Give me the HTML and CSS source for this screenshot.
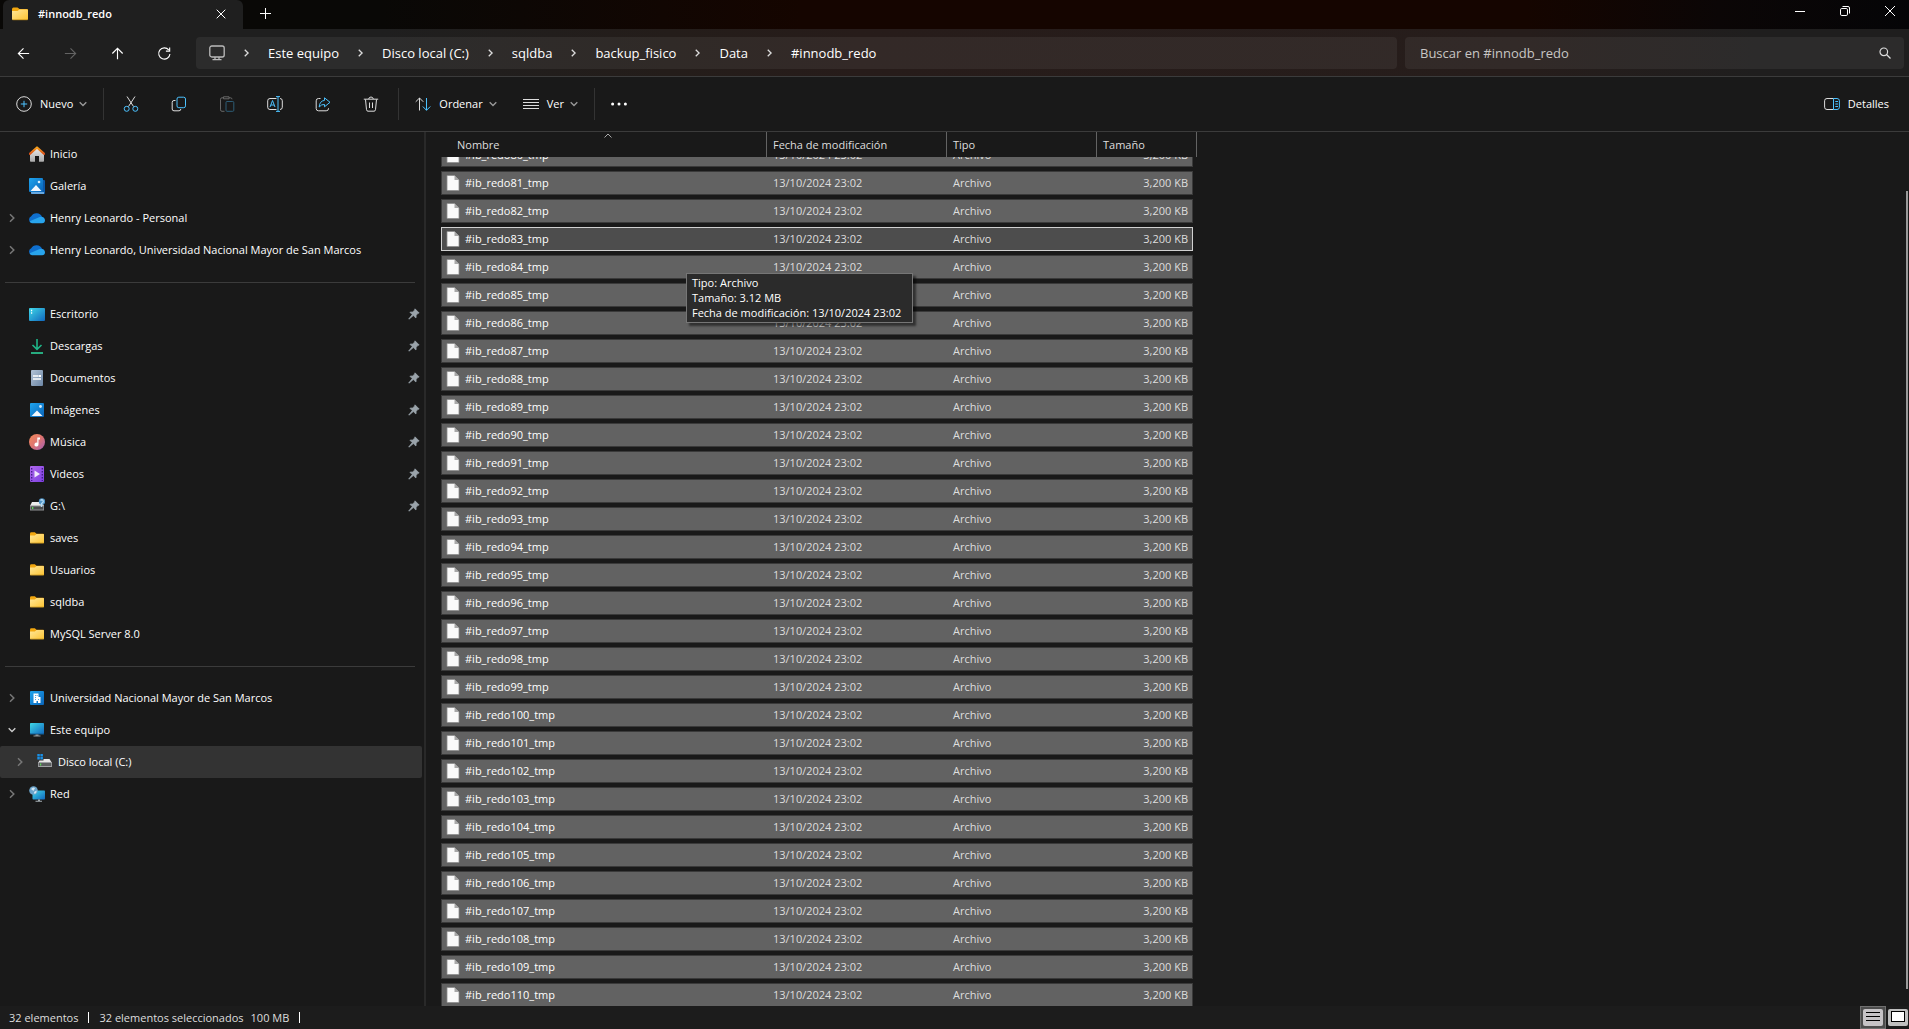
FILE: index.html
```html
<!DOCTYPE html>
<html lang="es">
<head>
<meta charset="utf-8">
<meta name="viewport" content="width=device-width, initial-scale=1">
<title>#innodb_redo</title>
<link rel="stylesheet" href="styles.css">
</head>
<body>
<svg class="defs" width="0" height="0" aria-hidden="true">
  <defs>
    <linearGradient id="gFolder" x1="0" y1="0" x2="1" y2="1"><stop offset="0" stop-color="#ffe79a"/><stop offset="1" stop-color="#fdc432"/></linearGradient>
    <linearGradient id="gRoof" x1="0" y1="0" x2="0" y2="1"><stop offset="0" stop-color="#f7a11b"/><stop offset="1" stop-color="#d9511a"/></linearGradient>
    <linearGradient id="gWall" x1="0" y1="0" x2="0" y2="1"><stop offset="0" stop-color="#f0f0f0"/><stop offset="1" stop-color="#a9a9a9"/></linearGradient>
    <linearGradient id="gBlue" x1="0" y1="0" x2="1" y2="1"><stop offset="0" stop-color="#1ea4ee"/><stop offset="1" stop-color="#0a63b8"/></linearGradient>
    <linearGradient id="gDesk" x1="0" y1="0" x2="1" y2="1"><stop offset="0" stop-color="#3fd8e8"/><stop offset="1" stop-color="#1167bd"/></linearGradient>
    <linearGradient id="gDoc" x1="0" y1="0" x2="1" y2="1"><stop offset="0" stop-color="#b3c3d6"/><stop offset="1" stop-color="#6c86a5"/></linearGradient>
    <linearGradient id="gMusic" x1="0" y1="0" x2="1" y2="1"><stop offset="0" stop-color="#f48a58"/><stop offset=".5" stop-color="#dd7472"/><stop offset="1" stop-color="#a45fb5"/></linearGradient>
    <linearGradient id="gVideo" x1="0" y1="0" x2="1" y2="1"><stop offset="0" stop-color="#b068ee"/><stop offset="1" stop-color="#7c3fe0"/></linearGradient>
  </defs>
  <symbol id="i-folder" viewBox="0 0 16 16"><path d="M0 3.2Q0 1.500 1.500 1.500h4L7.500 3H15q1 0 1 1v4H0z" fill="#f2a70f"/><path d="M0 5h5.500L7.500 3.500H15q1 0 1 1V13q0 1-1 1H1q-1 0-1-1z" fill="url(#gFolder)"/><path d="M.5 13.800h15" stroke="#b98411" stroke-width=".7"/></symbol>
  <symbol id="i-home" viewBox="0 0 16 16"><path d="M1 7l7-6 7 6v8q0 .8-.8.8H10V10H6v5.800H1.800Q1 15.800 1 15z" fill="url(#gWall)"/><path d="M.8 7.800L8 1.500l7.200 6.300" fill="none" stroke="url(#gRoof)" stroke-width="2.200" stroke-linecap="round" stroke-linejoin="round"/></symbol>
  <symbol id="i-gallery" viewBox="0 0 16 16"><rect x="2" y="2" width="14" height="14" rx="1" fill="#0a58a8"/><path d="M2 14h13v2H3q-1 0-1-1z" fill="#67a8e0"/><rect width="14" height="14" rx="1" fill="url(#gBlue)"/><path d="M1.500 13L7 7l5.500 6z" fill="#f1f7fd"/><circle cx="10" cy="4" r="1.300" fill="#d7edfc"/></symbol>
  <symbol id="i-cloud" viewBox="0 0 16 16"><path d="M3.500 13A3.500 3.500 0 0 1 2.200 6.300 6 6 0 0 1 13 6.800 3.200 3.200 0 0 1 13 13z" fill="#0f6fce"/><path d="M3 13.200Q1 13 .7 11.300L9.500 7.500Q12 6.300 14 7.300q2 1 2 3 0 2.900-3 2.900z" fill="#28a4ec"/></symbol>
  <symbol id="i-desktop" viewBox="0 0 16 16"><rect y="2" width="16" height="13" rx="1" fill="url(#gDesk)"/><path d="M2 4.500h1.200M2 7h1.200" stroke="#fff" stroke-width="1.300"/></symbol>
  <symbol id="i-download" viewBox="0 0 16 16"><path d="M8 1v10M3.500 7L8 11.300 12.500 7" fill="none" stroke="#1fb487" stroke-width="1.600"/><path d="M2 15h12" stroke="#2bc793" stroke-width="1.700"/></symbol>
  <symbol id="i-doc" viewBox="0 0 16 16"><rect x="2" width="12" height="16" rx="1" fill="url(#gDoc)"/><path d="M4 6h5M4 9h8" stroke="#fff" stroke-width="1.500"/><rect x="9.500" y="5" width="2.500" height="2" fill="#fff"/></symbol>
  <symbol id="i-images" viewBox="0 0 16 16"><rect x="1" y="1" width="14" height="14" rx="1" fill="url(#gBlue)"/><path d="M2.500 14L8 8.500l5.500 5.500z" fill="#f1f7fd"/><circle cx="11.500" cy="4.500" r="1.400" fill="#d7edfc"/></symbol>
  <symbol id="i-music" viewBox="0 0 16 16"><circle cx="8" cy="8" r="8" fill="url(#gMusic)"/><path d="M8.300 3.500h2.700v2H9.500v5a2 2 0 1 1-1.200-1.800z" fill="#fff"/></symbol>
  <symbol id="i-video" viewBox="0 0 16 16"><rect x="1" width="14" height="16" rx="1" fill="url(#gVideo)"/><path d="M2.700 2v13M13.300 2v13" stroke="#3f1a86" stroke-width="1.300" stroke-dasharray="1.500 1.500"/><path d="M5.500 4.500L11 8l-5.500 3.500z" fill="#f1e8fc"/></symbol>
  <symbol id="i-netdrive" viewBox="0 0 16 16"><path d="M3 4h10l2 4H1z" fill="#ededed"/><rect x="1" y="7.500" width="14" height="5" fill="#8f9193"/><rect x="1.800" y="8.500" width="12.400" height="3" fill="#4a4c4d"/><rect x="3" y="9" width="1.300" height="2" fill="#5fd85a"/><circle cx="13" cy="3.500" r="3.200" fill="#4e93c6"/><path d="M11.500 2.500q1.500-1.500 2.500 0t-1.500 3V9" fill="none" stroke="#b8dcf3" stroke-width="1.300"/></symbol>
  <symbol id="i-drive" viewBox="0 0 16 16"><path d="M6.500 5h6l2.500 4H1l1.500-2.500h4z" fill="#e8e8e8"/><rect x="1" y="8" width="14" height="5" rx=".5" fill="#9fa1a3"/><rect x="1.800" y="9" width="12.400" height="3" fill="#5c5e5f"/><rect x="3" y="9.500" width="1.200" height="2" fill="#5fd85a"/><path d="M.3 0h2.500v2.400H.3zM3.400 0h2.500v2.400H3.400zM.3 3h2.500v2.400H.3zM3.400 3h2.500v2.400H3.400z" fill="#1990e6"/></symbol>
  <symbol id="i-org" viewBox="0 0 16 16"><rect x="1" y="1" width="14" height="14" rx="1" fill="url(#gBlue)"/><path d="M4.500 3.500h5V7H11.500v6H9v-2H7.500v2h-3z" fill="#fff"/><path d="M6 5.500h.8M7.700 5.500h.8M6 7.500h.8M6 9.500h.8M9 9.500h.8" stroke="#2b8bd8"/></symbol>
  <symbol id="i-pc" viewBox="0 0 16 16"><rect x="1" y="1" width="14" height="11" rx=".8" fill="url(#gDesk)"/><path d="M1 12h14" stroke="#0f5c96"/><path d="M6.500 12.500h3v1h2v1h-7v-1h2z" fill="#8f979c"/></symbol>
  <symbol id="i-network" viewBox="0 0 16 16"><rect x="3.500" y="4.500" width="12.500" height="9" rx=".8" fill="url(#gDesk)"/><path d="M9 13.500h2v1.300h2v1H6.500v-1H9z" fill="#a4adb2"/><circle cx="4.500" cy="4.500" r="4.300" fill="#6ba4cb"/><path d="M2 3q2-2.500 4-1L4.500 5zM5 6l2.500-1.500Q8 7 5.500 8z" fill="#d5e8f4"/></symbol>
  <symbol id="i-pin" viewBox="0 0 12 12"><path d="M7 .8L11.200 5l-1.200.3-1.800 2L8 10 5.300 7.600 1 11.200l-.3-.2L4.200 6.600 1.900 4.200l2.800-.3L6.700 2z" fill="#9aa3aa" stroke="#9aa3aa" stroke-width=".7" stroke-linejoin="round"/></symbol>
  <symbol id="i-right" viewBox="0 0 8 8"><path d="M2 .3L5.800 4 2 7.700" fill="none" stroke="currentColor" stroke-width="1.500"/></symbol>
  <symbol id="i-down" viewBox="0 0 8 8"><path d="M.7 2.300L4 5.500l3.300-3.200" fill="none" stroke="currentColor" stroke-width="1.400"/></symbol>
  <symbol id="i-file" viewBox="0 0 14 16"><path d="M1 .5h7.500L13 5v10.500H1z" fill="#fafafa" stroke="#8e8e8e" stroke-width=".8"/><path d="M8.500.5V5H13z" fill="#a8a8a8"/></symbol>
</svg>

<div class="window">
  <header class="titlebar">
    <div class="tab">
      <svg class="icon"><use href="#i-folder"/></svg>
      <span class="tab-title">#innodb_redo</span>
      <button class="tab-close" aria-label="Cerrar pestaña"><svg viewBox="0 0 10 10"><path d="M.7.700l8.600 8.600M9.300.700L.7 9.300"/></svg></button>
    </div>
    <button class="tab-new" aria-label="Nueva pestaña"><svg viewBox="0 0 11 11"><path d="M5.500 0v11M0 5.500h11"/></svg></button>
    <div class="window-controls">
      <button aria-label="Minimizar"><svg viewBox="0 0 10 10"><path d="M0 5.500h10"/></svg></button>
      <button aria-label="Restaurar"><svg viewBox="0 0 10 10"><rect x=".5" y="2.500" width="7" height="7" rx="1.300"/><path d="M2.500.5H8q1.500 0 1.500 1.500v5.500"/></svg></button>
      <button aria-label="Cerrar"><svg viewBox="0 0 10 10"><path d="M0 0l10 10M10 0L0 10"/></svg></button>
    </div>
  </header>

  <div class="navbar">
    <div class="nav-buttons">
      <button aria-label="Atrás"><svg viewBox="0 0 16 16"><path d="M14 8H2.500M8 2.500L2.500 8 8 13.500"/></svg></button>
      <button aria-label="Adelante" disabled><svg viewBox="0 0 16 16"><path d="M2 8h11.500M8 2.500L13.500 8 8 13.500"/></svg></button>
      <button aria-label="Arriba"><svg viewBox="0 0 16 16"><path d="M8 14V2.500M2.500 8L8 2.500 13.500 8"/></svg></button>
      <button aria-label="Actualizar"><svg viewBox="0 0 16 16"><path d="M13.800 8.500A6 6 0 1 1 12.500 4.200M13.500 1.500v4h-4"/></svg></button>
    </div>
    <nav class="breadcrumb" aria-label="Ruta">
      <svg class="monitor" viewBox="0 0 16 16"><rect x=".8" y="1" width="14.400" height="11" rx="2"/><path d="M6 12v2.500M10 12v2.500M3.500 14.700h9"/></svg>
      <svg class="sep"><use href="#i-right"/></svg><a href="#">Este equipo</a>
      <svg class="sep"><use href="#i-right"/></svg><a href="#">Disco local (C:)</a>
      <svg class="sep"><use href="#i-right"/></svg><a href="#">sqldba</a>
      <svg class="sep"><use href="#i-right"/></svg><a href="#">backup_fisico</a>
      <svg class="sep"><use href="#i-right"/></svg><a href="#">Data</a>
      <svg class="sep"><use href="#i-right"/></svg><a href="#">#innodb_redo</a>
    </nav>
    <label class="search">
      <input type="search" placeholder="Buscar en #innodb_redo" aria-label="Buscar en #innodb_redo">
      <svg viewBox="0 0 12 12"><circle cx="4.800" cy="4.800" r="3.800"/><path d="M7.500 7.500l4 4"/></svg>
    </label>
  </div>

  <div class="toolbar">
    <button class="text-button"><svg class="icon line" viewBox="0 0 16 16"><circle cx="8" cy="8" r="7.300"/><path class="accent" d="M8 4.800v6.400M4.800 8h6.400"/></svg>Nuevo<svg class="caret"><use href="#i-down"/></svg></button>
    <span class="divider"></span>
    <div class="icon-group">
      <button aria-label="Cortar"><svg class="icon line" viewBox="0 0 16 16"><path d="M4 .5l6.500 10M12 .5l-6.500 10"/><circle class="accent" cx="3.700" cy="12.800" r="2.500"/><circle class="accent" cx="12.300" cy="12.800" r="2.500"/></svg></button>
      <button aria-label="Copiar"><svg class="icon line" viewBox="0 0 16 16"><path d="M4.500 4.500H3Q1.200 4.500 1.200 6.300V13q0 1.800 1.800 1.800h5q1.800 0 1.800-1.800"/><rect class="accent" x="6" y="1.200" width="8.500" height="10.500" rx="1.800"/></svg></button>
      <button aria-label="Pegar" disabled><svg class="icon line" viewBox="0 0 16 16"><path d="M5.500 15.300H3q-1.500 0-1.500-1.500V3.300q0-1.500 1.500-1.500h1.500M10 1.800h1.500q1.500 0 1.500 1.500M4.500.8H10v2H4.500z"/><rect class="accent" x="7" y="5.500" width="7.800" height="9.800" rx="1"/></svg></button>
      <button aria-label="Cambiar nombre"><svg class="icon line" viewBox="0 0 16 16"><path d="M9.500 2.500H3Q.7 2.500.7 4.800v6.400q0 2.300 2.300 2.300h6.500M13 2.500q2.300 0 2.300 2.300v6.400q0 2.300-2.300 2.300"/><path class="accent" d="M11 .6v14.800M9 .6h4M9 15.400h4M3 11l2.500-6.500L8 11M4 9h3"/></svg></button>
      <button aria-label="Compartir"><svg class="icon line" viewBox="0 0 16 16"><path d="M5.500 2.500H3.500Q1.200 2.500 1.200 4.800v7.700q0 2.300 2.300 2.300h7.700q2.300 0 2.300-2.300V12"/><path class="accent" d="M9.500 1.800L15 6.300l-5.500 4.500V8.500Q6.500 8 4.200 11 4.500 5 9.500 4.400z"/></svg></button>
      <button aria-label="Eliminar"><svg class="icon line" viewBox="0 0 16 16"><path d="M.8 3.200h14.400M5.700 3Q6 1 8 1t2.300 2M2.500 3.500l1 10.200q.2 1.500 1.500 1.500h6q1.300 0 1.500-1.500l1-10.200M6.500 6.500v5.500M9.500 6.500v5.500"/></svg></button>
    </div>
    <span class="divider"></span>
    <button class="text-button sort-button"><svg class="icon line" viewBox="0 0 16 16"><path d="M4.500 14.500V2M.7 5.800L4.500 2l3.800 3.800"/><path class="accent" d="M11.500 2v12.300M7.800 10.500l3.700 3.800 3.800-3.800"/></svg>Ordenar<svg class="caret"><use href="#i-down"/></svg></button>
    <button class="text-button"><svg class="icon line" viewBox="0 0 16 16"><path d="M0 3.500h16M0 6.500h16M0 9.500h16M0 12.500h16"/></svg>Ver<svg class="caret"><use href="#i-down"/></svg></button>
    <span class="divider"></span>
    <button class="text-button" aria-label="Más opciones"><svg class="icon dots" viewBox="0 0 16 16"><circle cx="1.600" cy="8" r="1.500"/><circle cx="8" cy="8" r="1.500"/><circle cx="14.400" cy="8" r="1.500"/></svg></button>
    <button class="text-button details"><svg class="icon line" viewBox="0 0 16 16"><path d="M9.500 2.500H3Q.6 2.500.6 4.800v6.400q0 2.300 2.400 2.300h6.500"/><path class="accent" d="M9.500 2.500H13q2.400 0 2.400 2.300v6.400q0 2.300-2.400 2.300H9.500zM11.300 5.500H14M11.300 8H14M11.300 10.500H14"/></svg>Detalles</button>
  </div>

  <div class="body">
    <nav class="sidebar" aria-label="Panel de navegación">
      <ul>
        <li><a href="#"><svg class="icon"><use href="#i-home"/></svg>Inicio</a></li>
        <li><a href="#"><svg class="icon"><use href="#i-gallery"/></svg>Galería</a></li>
        <li><a href="#"><svg class="expand"><use href="#i-right"/></svg><svg class="icon"><use href="#i-cloud"/></svg>Henry Leonardo - Personal</a></li>
        <li><a href="#"><svg class="expand"><use href="#i-right"/></svg><svg class="icon"><use href="#i-cloud"/></svg>Henry Leonardo, Universidad Nacional Mayor de San Marcos</a></li>
      </ul>
      <hr>
      <ul>
        <li><a href="#"><svg class="icon"><use href="#i-desktop"/></svg>Escritorio<svg class="pin"><use href="#i-pin"/></svg></a></li>
        <li><a href="#"><svg class="icon"><use href="#i-download"/></svg>Descargas<svg class="pin"><use href="#i-pin"/></svg></a></li>
        <li><a href="#"><svg class="icon"><use href="#i-doc"/></svg>Documentos<svg class="pin"><use href="#i-pin"/></svg></a></li>
        <li><a href="#"><svg class="icon"><use href="#i-images"/></svg>Imágenes<svg class="pin"><use href="#i-pin"/></svg></a></li>
        <li><a href="#"><svg class="icon"><use href="#i-music"/></svg>Música<svg class="pin"><use href="#i-pin"/></svg></a></li>
        <li><a href="#"><svg class="icon"><use href="#i-video"/></svg>Videos<svg class="pin"><use href="#i-pin"/></svg></a></li>
        <li><a href="#"><svg class="icon"><use href="#i-netdrive"/></svg>G:\<svg class="pin"><use href="#i-pin"/></svg></a></li>
        <li><a href="#"><svg class="icon small"><use href="#i-folder"/></svg>saves</a></li>
        <li><a href="#"><svg class="icon small"><use href="#i-folder"/></svg>Usuarios</a></li>
        <li><a href="#"><svg class="icon small"><use href="#i-folder"/></svg>sqldba</a></li>
        <li><a href="#"><svg class="icon small"><use href="#i-folder"/></svg>MySQL Server 8.0</a></li>
      </ul>
      <hr>
      <ul>
        <li><a href="#"><svg class="expand"><use href="#i-right"/></svg><svg class="icon"><use href="#i-org"/></svg>Universidad Nacional Mayor de San Marcos</a></li>
        <li><a href="#"><svg class="expand open"><use href="#i-down"/></svg><svg class="icon"><use href="#i-pc"/></svg>Este equipo</a></li>
        <li class="child selected"><a href="#"><svg class="expand"><use href="#i-right"/></svg><svg class="icon"><use href="#i-drive"/></svg>Disco local (C:)</a></li>
        <li><a href="#"><svg class="expand"><use href="#i-right"/></svg><svg class="icon"><use href="#i-network"/></svg>Red</a></li>
      </ul>
    </nav>

    <main class="content">
      <table class="files">
        <thead>
          <tr><th scope="col">Nombre<svg class="sort" viewBox="0 0 8 5"><path d="M.5 4.500L4 1l3.500 3.500"/></svg></th><th scope="col">Fecha de modificación</th><th scope="col">Tipo</th><th scope="col">Tamaño</th></tr>
        </thead>
        <tbody id="rows"></tbody>
      </table>
      <div class="tooltip" role="tooltip">Tipo: Archivo<br>Tamaño: 3.12 MB<br>Fecha de modificación: 13/10/2024 23:02</div>
      <div class="scrollbar"></div>
    </main>
  </div>

  <footer class="statusbar">
    <span class="cell">32 elementos</span>
    <span class="cell"><span>32 elementos seleccionados</span><span>100 MB</span></span>
    <div class="views">
      <button class="active" aria-label="Detalles"><svg viewBox="0 0 20 17"><rect width="20" height="17" rx="2" fill="#c6c3c6"/><path d="M3 3.500h14M3 7.500h14M3 11.500h14" stroke="#000"/></svg></button>
      <button aria-label="Iconos grandes"><svg viewBox="0 0 20 17"><rect width="20" height="17" rx="2" fill="#bfbfbf"/><rect x="3.500" y="2.500" width="13" height="10" fill="#fff" stroke="#000"/></svg></button>
    </div>
  </footer>
</div>
<script src="app.js"></script>
</body>
</html>
```

FILE: styles.css
```css
* { box-sizing: border-box; }

body {
  margin: 0;
  background: #191919;
  color: #fff;
  font: 11px/16px "Open Sans", "Noto Sans", sans-serif;
}

button, input { font: inherit; color: inherit; }

button {
  padding: 0;
  border: 0;
  background: none;
  display: flex;
  align-items: center;
  justify-content: center;
}

a { color: inherit; text-decoration: none; }
svg { flex: none; }
ul { list-style: none; margin: 0; padding: 0; }
.defs { position: absolute; }

.icon { width: 16px; height: 16px; }

.window {
  display: flex;
  flex-direction: column;
  height: 100vh;
}

/* Title bar */
.titlebar {
  display: flex;
  height: 29px;
  flex: none;
  background: linear-gradient(90deg, #090806 20%, #150500 42%, #150500 80%, #0b0606 90%, #050507);
}

.tab {
  display: flex;
  align-items: center;
  gap: 10px;
  width: 240px;
  margin-left: 3px;
  padding: 0 12px 2px 9px;
  background: #1f1f1f;
  border-radius: 6px 6px 0 0;
}

.tab-title { flex: 1; font-weight: 600; }
.titlebar svg { fill: none; stroke: #fff; }
.titlebar .icon { stroke: none; }
.titlebar button svg { width: 10px; height: 10px; }
.titlebar .tab-close { width: 20px; }
.titlebar .tab-new { width: 45px; padding-bottom: 2px; }
.titlebar .tab-new svg { width: 11px; height: 11px; }
.window-controls { display: flex; margin-left: auto; padding-bottom: 7px; }
.window-controls button { width: 45px; }
.window-controls button:last-child { width: 42px; padding-left: 4px; }

/* Address row */
.navbar {
  display: flex;
  flex: none;
  gap: 8px;
  height: 48px;
  padding: 8px 5px 7px 0;
  background: linear-gradient(90deg, #1f1f1f 20%, #241d1a 35%, #271c1a 45%, #261d1b 80%, #1f1e1e 92%);
  border-bottom: 1px solid #3b3b3b;
  font-size: 13px;
}

.nav-buttons { display: flex; width: 188px; }
.nav-buttons button { flex: 1; }
.nav-buttons button:disabled { opacity: .3; }
.nav-buttons svg { width: 15px; height: 15px; fill: none; stroke: #fff; stroke-width: 1.2; }

.breadcrumb, .search { background: rgba(255, 255, 255, .06); border-radius: 4px; height: 32px; }

.breadcrumb {
  display: flex;
  align-items: center;
  flex: 1;
  gap: 18px;
  padding-left: 13px;
}

.monitor { width: 16px; height: 16px; fill: none; stroke: #bbb; stroke-width: 1.3; }
.sep { width: 7px; height: 8px; color: #ddd; }

.search {
  display: flex;
  align-items: center;
  width: 499px;
  padding: 0 13px 0 15px;
}

.search input {
  flex: 1;
  min-width: 0;
  padding: 0;
  border: 0;
  outline: 0;
  background: none;
}

.search input::placeholder { color: #c8c6c4; opacity: 1; }
.search svg { width: 12px; height: 12px; fill: none; stroke: #ddd; stroke-width: 1.2; }

/* Command bar */
.toolbar {
  display: flex;
  flex: none;
  align-items: center;
  height: 55px;
  border-bottom: 1px solid #3b3b3b;
}

.text-button { gap: 8px; padding: 0 16px; height: 32px; }
.line { fill: none; stroke: #ddd; stroke-width: 1; }
.accent { stroke: #4cc2ff; }
.caret { width: 8px; height: 8px; margin-left: -2px; color: #999; }
.dots { fill: #fff; }
.divider { width: 1px; height: 32px; background: #333; }
.icon-group { display: flex; padding: 0 3px; }
.icon-group button { width: 48px; height: 32px; }
.icon-group button:disabled { opacity: .4; }
.toolbar .sort-button { padding-right: 10px; }
.toolbar .details { margin-left: auto; padding-right: 20px; }

/* Body */
.body { display: flex; flex: 1; min-height: 0; }

.sidebar {
  flex: none;
  width: 426px;
  padding: 6px 2px 0 0;
  border-right: 2px solid #292929;
}

.sidebar hr { height: 1px; margin: 16px 7px 15px 5px; border: 0; background: #3b3b3b; }

.sidebar a {
  display: flex;
  align-items: center;
  gap: 5px;
  height: 32px;
  padding: 0 2px 0 29px;
}

.sidebar .child a { padding-left: 37px; }
.selected { background: #333; border-radius: 2px; }
.small { padding: 1px; }
.expand { width: 8px; height: 10px; margin: 0 8px 0 -21px; color: #777; }
.open { color: #ccc; }
.pin { width: 12px; height: 12px; margin-left: auto; }

/* File list */
.content { position: relative; flex: 1; min-width: 0; }

.files {
  display: flex;
  flex-direction: column;
  height: 100%;
  width: 771px;
  padding-left: 15px;
}

.files thead, .files tbody { display: block; }
.files tr { display: grid; grid-template-columns: 326px 180px 150px 1fr; }
.files th { position: relative; height: 25px; padding: 5px 6px 0; border-right: 1px solid #636363; font-weight: 400; text-align: left; color: #dedede; }
.files th:first-child { padding-left: 16px; }
.sort { position: absolute; left: 163px; top: 1px; width: 8px; height: 5px; fill: none; stroke: #aaa; }

.files tbody { flex: 1; min-height: 0; overflow: hidden; }
.files tbody tr {
  width: 752px;
  height: 24px;
  margin-bottom: 4px;
  background: #626262;
  border: 1px solid #3a3a3a;
}
.files tbody tr:first-child { margin-top: -14px; }
.files tbody tr.focused { background: #4d4d4d; border-color: #d0d0d0; }

.files td { padding: 0 5px; line-height: 22px; color: #dedede; }
.files td:first-child { display: flex; align-items: center; gap: 5px; height: 22px; padding: 0 4px; color: #fff; }
.files td:last-child { padding-right: 4px; text-align: right; }
.files td svg { width: 14px; height: 16px; }

.tooltip {
  position: absolute;
  left: 260px;
  top: 141px;
  min-width: 227px;
  padding: 1px 5px 2px;
  background: #2b2b2b;
  border: 1px solid #767676;
  box-shadow: 3px 3px 2px rgba(0, 0, 0, .5);
  line-height: 15px;
  white-space: nowrap;
}

.scrollbar { position: absolute; right: 1px; top: 59px; bottom: 17px; width: 2px; background: #9a9a9a; }

/* Status bar */
.statusbar {
  display: flex;
  flex: none;
  align-items: center;
  height: 23px;
  padding-left: 9px;
  background: #1c1c1c;
  color: #dedede;
}

.cell { display: flex; gap: 7px; line-height: 11px; padding-right: 10px; margin-right: 10px; border-right: 1px solid #fff; }
.views { display: flex; align-items: center; margin-left: auto; }
.views button { width: 23px; height: 23px; }
.views button.active { width: 26px; background: #4d4d4d; border: 1px solid #707070; }
.views svg { width: 20px; height: 17px; fill: none; }
```

FILE: app.js
```js
const FIRST = 80;
const LAST = 110;
const FOCUSED = 83;

const rows = [];
for (let n = FIRST; n <= LAST; n++) {
  rows.push(`<tr${n === FOCUSED ? ' class="focused"' : ''}>
    <td><svg><use href="#i-file"/></svg>#ib_redo${n}_tmp</td>
    <td>13/10/2024 23:02</td>
    <td>Archivo</td>
    <td>3,200 KB</td>
  </tr>`);
}
document.getElementById('rows').innerHTML = rows.join('');
```
